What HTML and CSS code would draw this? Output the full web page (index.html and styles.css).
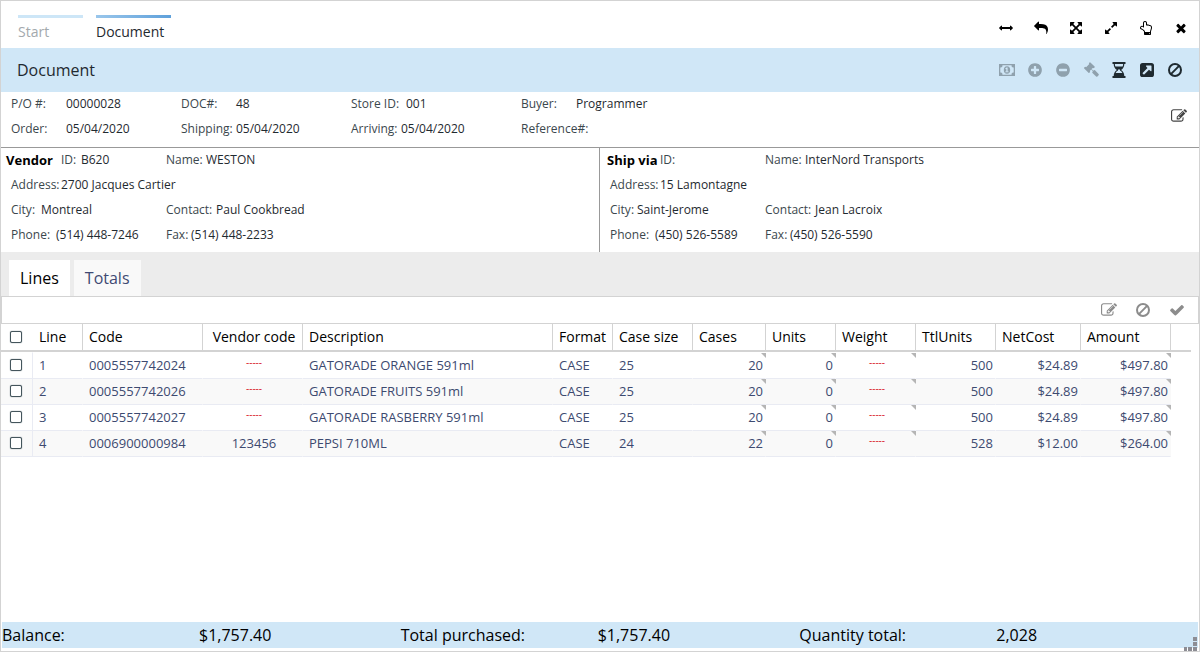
FILE: index.html
```html
<!DOCTYPE html>
<html lang="en">
<head>
<meta charset="utf-8">
<title>Document</title>
<link rel="stylesheet" href="styles.css">
</head>
<body>
<svg class="sprite" aria-hidden="true">
  <symbol id="i-width" viewBox="0 0 1792 1792"><path d="M1792 896q0 26-19 45l-256 256q-19 19-45 19t-45-19-19-45v-128h-1024v128q0 26-19 45t-45 19-45-19l-256-256q-19-19-19-45t19-45l256-256q19-19 45-19t45 19 19 45v128h1024v-128q0-26 19-45t45-19 45 19l256 256q19 19 19 45z"/></symbol>
  <symbol id="i-back" viewBox="0 0 1792 1792"><path transform="matrix(-1 0 0 1 1792 0)" d="M1792 640q0 26-19 45l-512 512q-19 19-45 19t-45-19-19-45v-256h-224q-98 0-175.500 6t-154 21.500-133 42.500-105.500 69.500-80 101-48.500 138.500-17.500 181q0 55 5 123 0 6 2.500 23.500t2.500 26.500q0 15-8.500 25t-23.500 10q-16 0-28-17-7-9-13-22t-13.500-30-10.500-24q-127-285-127-451 0-199 53-333 162-403 875-403h224v-256q0-26 19-45t45-19 45 19l512 512q19 19 19 45z"/></symbol>
  <symbol id="i-arrows" viewBox="0 0 1792 1792"><path d="M1411 541l-355 355 355 355 144-144q29-31 70-14 39 17 39 59v448q0 26-19 45t-45 19h-448q-42 0-59-40-17-39 14-69l144-144-355-355-355 355 144 144q31 30 14 69-17 40-59 40h-448q-26 0-45-19t-19-45v-448q0-42 40-59 39-17 69 14l144 144 355-355-355-355-144 144q-19 19-45 19-12 0-24-5-40-17-40-59v-448q0-26 19-45t45-19h448q42 0 59 40 17 39-14 69l-144 144 355 355 355-355-144-144q-31-30-14-69 17-40 59-40h448q26 0 45 19t19 45v448q0 42-39 59-13 5-25 5-26 0-45-19z"/></symbol>
  <symbol id="i-expand" viewBox="0 0 1792 1792"><path d="M883 1056q0 13-10 23l-332 332 144 144q19 19 19 45t-19 45-45 19h-448q-26 0-45-19t-19-45v-448q0-26 19-45t45-19 45 19l144 144 332-332q10-10 23-10t23 10l114 114q10 10 10 23zm781-864v448q0 26-19 45t-45 19-45-19l-144-144-332 332q-10 10-23 10t-23-10l-114-114q-10-10-10-23t10-23l332-332-144-144q-19-19-19-45t19-45 45-19h448q26 0 45 19t19 45z"/></symbol>
  <symbol id="i-hand" viewBox="0 0 1792 1792"><path d="M1408 1600q0-26-19-45t-45-19-45 19-19 45 19 45 45 19 45-19 19-45zm128-764q0-189-167-189-26 0-56 5-16-30-52.500-47.500t-73.500-17.500-69 18q-50-53-119-53-25 0-55.500 10t-47.500 25v-331q0-52-38-90t-90-38q-51 0-89.500 39t-38.500 89v576q-20 0-48.500-15t-55-33-68-33-84.500-15q-67 0-97.500 44.500t-30.500 115.500q0 24 139 90 44 24 65 37 64 40 145 112 81 71 106 101 57 69 57 140v32h640v-32q0-72 32-167t64-193.500 32-179.500zm128-5q0 133-69 322-59 164-59 223v288q0 53-37.500 90.500t-90.500 37.500h-640q-53 0-90.500-37.500t-37.500-90.500v-288q0-10-4.500-21.500t-14-23.500-18-22.500-22.500-24-21.500-20.500-21.500-19-17-14q-74-65-129-100-21-13-62-33t-72-37-63-40.500-49.500-55-17.500-69.500q0-125 67-206.500t189-81.500q68 0 128 22v-374q0-104 77-181t179-77q105 0 181 75.500t76 180.500v169q62 4 119 37 21-3 43-3 101 0 178 60 139-1 219.500 85t80.500 227z"/></symbol>
  <symbol id="i-close" viewBox="0 0 1792 1792"><path d="M1490 1322q0 40-28 68l-136 136q-28 28-68 28t-68-28l-294-294-294 294q-28 28-68 28t-68-28l-136-136q-28-28-28-68t28-68l294-294-294-294q-28-28-28-68t28-68l136-136q28-28 68-28t68 28l294 294 294-294q28-28 68-28t68 28l136 136q28 28 28 68t-28 68l-294 294 294 294q28 28 28 68z"/></symbol>
  <symbol id="i-money" viewBox="0 0 18 16"><path fill-rule="evenodd" d="M1 2h16v12H1zM4.500 3.300a2 2 0 0 1-2.200 2.200v5a2 2 0 0 1 2.200 2.200h9a2 2 0 0 1 2.200-2.200v-5a2 2 0 0 1-2.200-2.200z"/><path fill-rule="evenodd" d="M9 4.200a3.200 3.800 0 0 1 0 7.600a3.200 3.800 0 0 1 0-7.600zM8.500 5.500L7.200 6.600l.6.700.5-.4v2.500h-1v.9h3.300v-.9h-1V5.500z"/></symbol>
  <symbol id="i-plus" viewBox="0 0 1792 1792"><path d="M1344 960v-128q0-26-19-45t-45-19h-256v-256q0-26-19-45t-45-19h-128q-26 0-45 19t-19 45v256h-256q-26 0-45 19t-19 45v128q0 26 19 45t45 19h256v256q0 26 19 45t45 19h128q26 0 45-19t19-45v-256h256q26 0 45-19t19-45zm320-64q0 209-103 385.500t-279.500 279.500-385.500 103-385.500-103-279.500-279.500-103-385.500 103-385.500 279.500-279.500 385.500-103 385.500 103 279.500 279.500 103 385.500z"/></symbol>
  <symbol id="i-minus" viewBox="0 0 1792 1792"><path d="M1344 960v-128q0-26-19-45t-45-19h-768q-26 0-45 19t-19 45v128q0 26 19 45t45 19h768q26 0 45-19t19-45zm320-64q0 209-103 385.500t-279.500 279.500-385.500 103-385.500-103-279.500-279.500-103-385.500 103-385.500 279.500-279.500 385.500-103 385.500 103 279.500 279.500 103 385.500z"/></symbol>
  <symbol id="i-gavel" viewBox="0 0 16 16"><path d="M6.500.4q.4-.4.900 0l4.200 4.200q.4.500 0 .9l-.7.600q-.4.300-.8 0l-.3-.2-1.200 1.200 1.700 1.700.5-.5q.6-.5 1.200 0l3.600 3.700q.6.700 0 1.300l-1.200 1.200q-.6.600-1.300 0L9.500 10.900q-.6-.6 0-1.200l.4-.5-1.700-1.700-1.400 1.400.2.300q.3.500 0 .9l-.6.700q-.5.400-.9 0L1.200 6.500q-.4-.5 0-.9l.7-.6q.5-.4.900 0l.3.200 3.200-3.200-.3-.3q-.2-.4.100-.7z"/></symbol>
  <symbol id="i-hourglass" viewBox="0 0 16 16"><path fill-rule="evenodd" d="M1.500 0h13v2h-1.200c0 2.800-1.300 4.800-3.200 6 1.900 1.200 3.200 3.200 3.200 6h1.200v2h-13v-2h1.200c0-2.800 1.300-4.800 3.200-6-1.900-1.200-3.200-3.200-3.200-6H1.500zM3.900 2c0 1 .2 1.900.5 2.600h7.200c.3-.7.500-1.600.5-2.600zM7 8.400c-1.100.5-1.900 1.400-2.400 2.600h6.800c-.5-1.200-1.300-2.100-2.400-2.600v-.8h-2z"/></symbol>
  <symbol id="i-external" viewBox="0 0 16 16"><path fill-rule="evenodd" d="M3.600 1h8.800A2.600 2.600 0 0 1 15 3.600v8.800a2.600 2.600 0 0 1-2.600 2.600H3.600A2.600 2.600 0 0 1 1 12.400V3.600A2.600 2.600 0 0 1 3.600 1zM7.500 3.500q-.8.200-.4 1L8.500 6 3.600 10.900v.5l1.100 1.100h.5L10 7.700l1.500 1.400q.8.400 1-.4V4q0-.5-.5-.5z"/></symbol>
  <symbol id="i-ban" viewBox="0 0 16 16"><g fill="none" stroke="currentColor" stroke-width="2"><circle cx="8" cy="8" r="6"/><path d="M12.100 3.900l-8.200 8.200"/></g></symbol>
  <symbol id="i-edit" viewBox="0 0 1792 1792"><path d="M888 1184l116-116-152-152-116 116v56h96v96h56zm440-720q-16-16-33 1l-350 350q-17 17-1 33t33-1l350-350q17-17 1-33zm80 594v190q0 119-84.500 203.500t-203.500 84.500h-832q-119 0-203.500-84.500t-84.500-203.500v-832q0-119 84.500-203.500t203.500-84.500h832q63 0 117 25 15 7 18 23 3 17-9 29l-49 49q-14 14-32 8-23-6-45-6h-832q-66 0-113 47t-47 113v832q0 66 47 113t113 47h832q66 0 113-47t47-113v-126q0-13 9-22l64-64q15-15 35-7t20 29zm-96-738l288 288-672 672h-288v-288zm444 132l-92 92-288-288 92-92q28-28 68-28t68 28l152 152q28 28 28 68t-28 68z"/></symbol>
  <symbol id="i-check" viewBox="0 0 1792 1792"><path d="M1671 566q0 40-28 68l-724 724-136 136q-28 28-68 28t-68-28l-136-136-362-362q-28-28-28-68t28-68l136-136q28-28 68-28t68 28l294 295 656-657q28-28 68-28t68 28l136 136q28 28 28 68z"/></symbol>
</svg>

<div class="window">
  <header class="topbar">
    <nav class="crumbs">
      <a class="crumb" href="#">Start</a>
      <a class="crumb crumb-active" href="#" aria-current="page">Document</a>
    </nav>
    <div class="window-tools">
      <button class="tool" type="button" aria-label="Fit width"><svg><use href="#i-width"/></svg></button>
      <button class="tool" type="button" aria-label="Back"><svg><use href="#i-back"/></svg></button>
      <button class="tool" type="button" aria-label="Full screen"><svg><use href="#i-arrows"/></svg></button>
      <button class="tool" type="button" aria-label="Expand"><svg><use href="#i-expand"/></svg></button>
      <button class="tool" type="button" aria-label="Pointer"><svg><use href="#i-hand"/></svg></button>
      <button class="tool" type="button" aria-label="Close"><svg><use href="#i-close"/></svg></button>
    </div>
  </header>

  <div class="titlebar">
    <h1 class="title">Document</h1>
    <div class="title-tools">
      <button class="action" type="button" disabled aria-label="Payment"><svg><use href="#i-money"/></svg></button>
      <button class="action" type="button" disabled aria-label="Add"><svg><use href="#i-plus"/></svg></button>
      <button class="action" type="button" disabled aria-label="Remove"><svg><use href="#i-minus"/></svg></button>
      <button class="action" type="button" disabled aria-label="Approve"><svg><use href="#i-gavel"/></svg></button>
      <button class="action" type="button" aria-label="Pending"><svg><use href="#i-hourglass"/></svg></button>
      <button class="action" type="button" aria-label="Open"><svg><use href="#i-external"/></svg></button>
      <button class="action" type="button" aria-label="Cancel"><svg><use href="#i-ban"/></svg></button>
    </div>
  </div>

  <section class="summary">
    <dl class="summary-grid">
      <div class="field"><dt class="w55">P/O #:</dt><dd>00000028</dd></div>
      <div class="field"><dt class="w55">DOC#:</dt><dd>48</dd></div>
      <div class="field"><dt class="w55">Store ID:</dt><dd>001</dd></div>
      <div class="field"><dt class="w55">Buyer:</dt><dd>Programmer</dd></div>
      <div class="field"><dt class="w55">Order:</dt><dd>05/04/2020</dd></div>
      <div class="field"><dt class="w55">Shipping:</dt><dd>05/04/2020</dd></div>
      <div class="field"><dt class="w50">Arriving:</dt><dd>05/04/2020</dd></div>
      <div class="field"><dt class="w55">Reference#:</dt><dd></dd></div>
    </dl>
    <button class="edit" type="button" aria-label="Edit"><svg><use href="#i-edit"/></svg></button>
  </section>

  <div class="parties">
    <section class="party">
      <div class="party-head"><h2 class="party-title">Vendor</h2><dl class="field"><dt class="w20">ID:</dt><dd>B620</dd></dl></div>
      <dl class="field"><dt class="w40">Name:</dt><dd>WESTON</dd></dl>
      <dl class="field wide"><dt class="w50">Address:</dt><dd>2700 Jacques Cartier</dd></dl>
      <dl class="field inset"><dt class="w30">City:</dt><dd>Montreal</dd></dl>
      <dl class="field"><dt class="w50">Contact:</dt><dd>Paul Cookbread</dd></dl>
      <dl class="field inset"><dt class="w45">Phone:</dt><dd>(514) 448-7246</dd></dl>
      <dl class="field"><dt class="w25">Fax:</dt><dd>(514) 448-2233</dd></dl>
    </section>
    <section class="party party-ship">
      <div class="party-head"><h2 class="party-title">Ship via</h2><dl class="field"><dt class="w20">ID:</dt><dd></dd></dl></div>
      <dl class="field"><dt class="w40">Name:</dt><dd>InterNord Transports</dd></dl>
      <dl class="field wide"><dt class="w50">Address:</dt><dd>15 Lamontagne</dd></dl>
      <dl class="field inset"><dt class="w27">City:</dt><dd>Saint-Jerome</dd></dl>
      <dl class="field"><dt class="w50">Contact:</dt><dd>Jean Lacroix</dd></dl>
      <dl class="field inset"><dt class="w45">Phone:</dt><dd>(450) 526-5589</dd></dl>
      <dl class="field"><dt class="w25">Fax:</dt><dd>(450) 526-5590</dd></dl>
    </section>
  </div>

  <div class="tabs" role="tablist">
    <button class="tab" type="button" role="tab" aria-selected="true">Lines</button>
    <button class="tab" type="button" role="tab" aria-selected="false">Totals</button>
  </div>

  <main class="panel">
    <div class="grid-tools">
      <button class="grid-tool" type="button" aria-label="Edit lines"><svg><use href="#i-edit"/></svg></button>
      <button class="grid-tool" type="button" aria-label="Cancel changes"><svg><use href="#i-ban"/></svg></button>
      <button class="grid-tool" type="button" aria-label="Accept changes"><svg><use href="#i-check"/></svg></button>
    </div>
    <div class="grid-wrap">
      <table class="grid">
        <colgroup>
          <col class="c-check"><col class="c-line"><col class="c-code"><col class="c-vendor"><col class="c-desc"><col class="c-format"><col class="c-size"><col class="c-cases"><col class="c-units"><col class="c-weight"><col class="c-ttl"><col class="c-net"><col class="c-amount"><col class="c-end">
        </colgroup>
        <thead>
          <tr><th class="check"><input type="checkbox" aria-label="Select all"></th><th>Line</th><th>Code</th><th class="center">Vendor code</th><th>Description</th><th>Format</th><th>Case size</th><th>Cases</th><th>Units</th><th>Weight</th><th>TtlUnits</th><th>NetCost</th><th>Amount</th><th class="end"></th></tr>
        </thead>
        <tbody>
          <tr><td class="check"><input type="checkbox" aria-label="Select line 1"></td><td>1</td><td>0005557742024</td><td class="center"><span class="none">-----</span></td><td>GATORADE ORANGE 591ml</td><td>CASE</td><td>25</td><td class="num mark">20</td><td class="num mark">0</td><td class="center mark"><span class="none">-----</span></td><td class="num">500</td><td class="num">$24.89</td><td class="num mark">$497.80</td><td class="end"></td></tr>
          <tr><td class="check"><input type="checkbox" aria-label="Select line 2"></td><td>2</td><td>0005557742026</td><td class="center"><span class="none">-----</span></td><td>GATORADE FRUITS 591ml</td><td>CASE</td><td>25</td><td class="num mark">20</td><td class="num mark">0</td><td class="center mark"><span class="none">-----</span></td><td class="num">500</td><td class="num">$24.89</td><td class="num mark">$497.80</td><td class="end"></td></tr>
          <tr><td class="check"><input type="checkbox" aria-label="Select line 3"></td><td>3</td><td>0005557742027</td><td class="center"><span class="none">-----</span></td><td>GATORADE RASBERRY 591ml</td><td>CASE</td><td>25</td><td class="num mark">20</td><td class="num mark">0</td><td class="center mark"><span class="none">-----</span></td><td class="num">500</td><td class="num">$24.89</td><td class="num mark">$497.80</td><td class="end"></td></tr>
          <tr><td class="check"><input type="checkbox" aria-label="Select line 4"></td><td>4</td><td>0006900000984</td><td class="center">123456</td><td>PEPSI 710ML</td><td>CASE</td><td>24</td><td class="num mark">22</td><td class="num mark">0</td><td class="center mark"><span class="none">-----</span></td><td class="num">528</td><td class="num">$12.00</td><td class="num mark">$264.00</td><td class="end"></td></tr>
        </tbody>
      </table>
    </div>
  </main>

  <footer class="totals">
    <div class="total"><span>Balance:</span><span>$1,757.40</span></div>
    <div class="total"><span>Total purchased:</span><span>$1,757.40</span></div>
    <div class="total"><span>Quantity total:</span><span>2,028</span></div>
  </footer>
  <svg class="grip" viewBox="0 0 14 14" aria-hidden="true"><path d="M9 0h4v4H9zM9 5h4v4H9zM9 10h4v4H9zM4 10h4v4H4zM0 10h3v4H0z"/></svg>
</div>
</body>
</html>
```
FILE: styles.css
```css
* { box-sizing: border-box; }
body { margin: 0; font-family: "Open Sans", sans-serif; font-size: 12px; color: #1f2a30; background: #fff; }
h1, h2, dl, dd { margin: 0; }
button { padding: 0; border: 0; background: none; font: inherit; color: inherit; display: flex; align-items: center; justify-content: center; }
svg { display: block; fill: currentColor; }
.sprite { position: absolute; width: 0; height: 0; }

.window { position: relative; display: flex; flex-direction: column; min-height: 100vh; border: 1px solid #d3d3d3; padding-bottom: 3px; }

.topbar { display: flex; justify-content: space-between; height: 47px; padding: 14px 11px 0 17px; }
.crumbs { display: flex; gap: 13px; }
.crumb { min-width: 65px; padding: 4px 7px 0 0; border-top: 3px solid #cde6f7; font-size: 14px; line-height: 20px; color: #a3a9ad; text-decoration: none; }
.crumb-active { border-image: linear-gradient(90deg, #9cc8ec, #5c9fda) 3; color: #1f2a30; font-weight: 500; }
.window-tools { display: flex; gap: 21px; height: 26px; align-items: center; color: #000; }
.tool svg { width: 14px; height: 14px; }

.titlebar { display: flex; align-items: center; justify-content: space-between; height: 44px; padding: 0 15px 0 16px; background: #d0e7f7; }
.title { font-size: 16px; line-height: 22px; font-weight: 500; }
.title-tools { display: flex; gap: 10px; }
.action svg { width: 18px; height: 16px; }
.action:disabled { color: #8fa1ad; }

.summary { display: flex; align-items: center; justify-content: space-between; padding: 0 12px 5px 10px; border-bottom: 1px solid #999; }
.summary-grid { display: grid; grid-template-columns: repeat(4, 170px); }
.edit svg { width: 16px; height: 16px; }
.edit { padding-bottom: 3px; color: #444; }

.field { display: flex; padding-bottom: 2px; line-height: 23px; white-space: nowrap; }
.field dt { font-weight: 400; color: #3b474d; }
.field dd { font-weight: 500; }
.w20 { width: 20px; }
.w25 { width: 25px; }
.w27 { width: 27px; }
.w30 { width: 30px; }
.w40 { width: 40px; }
.w45 { width: 45px; }
.w50 { width: 50px; }
.w55 { width: 55px; }

.parties { display: grid; grid-template-columns: 1fr 1fr; margin-right: 2px; }
.party { display: grid; grid-template-columns: 160px 1fr; align-content: start; padding: 0 0 4px 5px; }
.party-ship { border-left: 1px solid #999; }
.party-head { display: flex; }
.party-title { width: 55px; font-size: 13px; line-height: 25px; font-weight: 700; color: #000; white-space: nowrap; }
.party-ship .party-title { padding-left: 2px; }
.wide { grid-column: 1 / -1; padding-left: 5px; }
.inset { padding-left: 5px; }

.tabs { display: flex; gap: 4px; padding: 8px 8px 0; background: #ececec; }
.tab { height: 36px; padding: 0 11px; font-size: 16px; font-weight: 500; color: #3f4a73; background: #f9f9f9; }
.tab[aria-selected="true"] { color: #000; background: #fff; }

.panel { flex: 1; }
.grid-tools { display: flex; justify-content: flex-end; gap: 18px; height: 27px; padding: 0 13px; align-items: center; border: 1px solid #d3d3d3; border-bottom: 0; color: #8c8c8c; }
.grid-tool svg { width: 16px; height: 16px; }
.grid-wrap { padding-right: 8px; border-top: 1px solid #d3d3d3; }
.grid { width: 100%; table-layout: fixed; border-collapse: separate; border-spacing: 0; white-space: nowrap; }
.c-check { width: 32px; }
.c-line { width: 50px; }
.c-code { width: 120px; }
.c-vendor { width: 100px; }
.c-format { width: 60px; }
.c-size { width: 80px; }
.c-cases { width: 73px; }
.c-units { width: 70px; }
.c-weight { width: 80px; }
.c-ttl { width: 80px; }
.c-net { width: 85px; }
.c-amount { width: 90px; }
.c-end { width: 20px; }
.grid th { height: 28px; padding: 0 0 0 6px; border-right: 1px solid #d3d3d3; border-bottom: 2px solid #d3d3d3; font-size: 14px; line-height: 20px; font-weight: 400; text-align: left; color: #000; }
.grid td { position: relative; height: 26px; padding: 0 2px 1px 6px; border-right: 1px solid transparent; border-bottom: 1px solid #e9ebf3; font-size: 13px; line-height: 18px; color: #3d4a70; }
.grid tbody tr:first-child td { height: 27px; border-top: 1px solid transparent; }
.grid tbody tr:nth-child(even) td { background: #f9f9f9; }
.grid .center { text-align: center; padding: 0 0 1px 3px; }
.grid .num { text-align: right; }
.grid .check { padding: 0 0 1px 9px; border-right-color: #e9ebf3; }
.grid th.check { border-right: 0; }
.grid .end { border-right: 0; padding: 0; }
.grid tbody tr td.end { background: none; border-bottom: 0; }
.none { display: block; padding-bottom: 6px; font-size: 10px; line-height: 12px; color: #d8141f; }
.mark::after { content: ""; position: absolute; top: 0; right: -1px; border-top: 5px solid #b5b5b5; border-left: 5px solid transparent; }
input[type="checkbox"] { appearance: none; display: block; width: 12px; height: 12px; margin: 0; border: 1px solid #44555c; border-radius: 2px; background: #fff; box-shadow: 0 0 1px #44555c; }

.totals { display: grid; grid-template-columns: repeat(3, 1fr); margin: 0 1px; padding: 2px 0; background: #d0e7f7; font-size: 16px; line-height: 22px; color: #000; }
.total { display: grid; grid-template-columns: 197px 1fr; }
.grip { position: absolute; right: 1px; bottom: 0; width: 14px; height: 14px; color: #8d8d94; }
```
